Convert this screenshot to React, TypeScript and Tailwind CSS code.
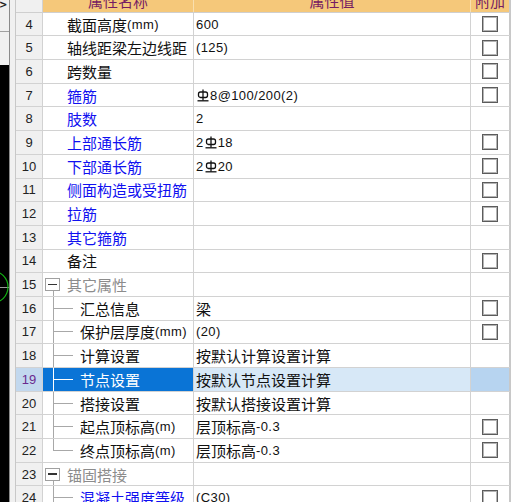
import React from "react";

type Row = {
  n: number;
  name: string;
  val?: string;
  cb?: boolean;
  blue?: boolean;
  kind?: "top" | "group" | "child" | "last";
  sel?: boolean;
};

const rows: Row[] = [
  { n: 4, name: "截面高度(mm)", val: "600", cb: true, kind: "top" },
  { n: 5, name: "轴线距梁左边线距", val: "(125)", cb: true, kind: "top" },
  { n: 6, name: "跨数量", val: "", cb: true, kind: "top" },
  { n: 7, name: "箍筋", val: "§8@100/200(2)", cb: true, blue: true, kind: "top" },
  { n: 8, name: "肢数", val: "2", cb: false, blue: true, kind: "top" },
  { n: 9, name: "上部通长筋", val: "2§18", cb: true, blue: true, kind: "top" },
  { n: 10, name: "下部通长筋", val: "2§20", cb: true, blue: true, kind: "top" },
  { n: 11, name: "侧面构造或受扭筋", val: "", cb: true, blue: true, kind: "top" },
  { n: 12, name: "拉筋", val: "", cb: true, blue: true, kind: "top" },
  { n: 13, name: "其它箍筋", val: "", cb: false, blue: true, kind: "top" },
  { n: 14, name: "备注", val: "", cb: true, kind: "top" },
  { n: 15, name: "其它属性", kind: "group" },
  { n: 16, name: "汇总信息", val: "梁", cb: true, kind: "child" },
  { n: 17, name: "保护层厚度(mm)", val: "(20)", cb: true, kind: "child" },
  { n: 18, name: "计算设置", val: "按默认计算设置计算", cb: false, kind: "child" },
  { n: 19, name: "节点设置", val: "按默认节点设置计算", cb: false, kind: "child", sel: true },
  { n: 20, name: "搭接设置", val: "按默认搭接设置计算", cb: false, kind: "child" },
  { n: 21, name: "起点顶标高(m)", val: "层顶标高-0.3", cb: true, kind: "child" },
  { n: 22, name: "终点顶标高(m)", val: "层顶标高-0.3", cb: true, kind: "last" },
  { n: 23, name: "锚固搭接", kind: "group" },
  { n: 24, name: "混凝土强度等级", val: "(C30)", cb: true, blue: true, kind: "child" },
];

function Rebar() {
  return (
    <svg
      width="12"
      height="13"
      viewBox="0 0 12 13"
      className="inline-block mx-[1px] align-[-1px]"
      fill="none"
      stroke="currentColor"
      strokeWidth="1.3"
    >
      <line x1="6" y1="0.5" x2="6" y2="11.5" />
      <rect x="1.5" y="3" width="9" height="5.5" rx="2" />
      <line x1="0.5" y1="11.8" x2="11.5" y2="11.8" />
    </svg>
  );
}

function Txt({ s }: { s: string }) {
  const parts = s.split(/(§|[\x20-\x7E]+)/).filter((p) => p !== "");
  return (
    <>
      {parts.map((p, i) => {
        if (p === "§") return <Rebar key={i} />;
        if (/^[\x20-\x7E]+$/.test(p))
          return (
            <span key={i} className="font-['Liberation_Sans',sans-serif] text-[13px] tracking-[0.4px]">
              {p}
            </span>
          );
        return (
          <span key={i} className="font-['Noto_Sans_CJK_SC',sans-serif] text-[15px]">
            {p}
          </span>
        );
      })}
    </>
  );
}

function Check() {
  return (
    <div className="w-[16px] h-[16px] border border-[#5c5c5c] bg-white shadow-[inset_0_0_0_1px_#b4b4b4]" />
  );
}

function NameCell({ r }: { r: Row }) {
  const line = r.sel ? "border-white" : "border-[#a8a8a8]";
  const color = r.sel ? "text-white" : r.kind === "group" ? "text-[#8c8c8c]" : r.blue ? "text-[#1010f0]" : "text-[#111]";
  const bg = r.sel ? "bg-[#0a74d6]" : "bg-white";
  if (r.kind === "group") {
    return (
      <div className={`w-[151px] h-full border-r border-[#d2d2d2] flex items-stretch ${bg}`}>
        <div className="ml-[2px] w-[15px] flex flex-col">
          <div className="flex-1" />
          <div className="h-[13px] border border-[#a0a0a0] bg-white flex items-center justify-center">
            <div className="w-[9px] h-[1.5px] bg-[#333]" />
          </div>
          <div className={`flex-1 ml-[8px] border-l ${line}`} />
        </div>
        <div className={`ml-[7px] flex items-center leading-none ${color}`}>
          <Txt s={r.name} />
        </div>
      </div>
    );
  }
  if (r.kind === "child" || r.kind === "last") {
    return (
      <div className={`w-[151px] h-full border-r border-[#d2d2d2] flex items-stretch ${bg}`}>
        <div className="ml-[10px] w-[20px] flex flex-col">
          <div className={`flex-1 border-l border-b ${line}`} />
          <div className={`flex-1 ${r.kind === "child" ? `border-l ${line}` : ""}`} />
        </div>
        <div className={`ml-[7px] flex items-center leading-none whitespace-nowrap ${color}`}>
          <Txt s={r.name} />
        </div>
      </div>
    );
  }
  return (
    <div className={`w-[151px] h-full border-r border-[#d2d2d2] flex items-center pl-[24px] leading-none whitespace-nowrap ${bg} ${color}`}>
      <Txt s={r.name} />
    </div>
  );
}

function GridRow({ r }: { r: Row }) {
  return (
    <div className="flex h-[23.7px] shrink-0 border-b border-[#d2d2d2]">
      <div
        className={`w-[27px] h-full border-r border-[#d2d2d2] flex items-center justify-center font-['Liberation_Sans',sans-serif] text-[13px] leading-none ${
          r.sel ? "bg-[#c2d8ee] text-[#6a2a8e]" : "bg-[#f0f0f0] text-[#222]"
        }`}
      >
        {r.n}
      </div>
      <NameCell r={r} />
      <div
        className={`w-[277px] h-full border-r border-[#d2d2d2] flex items-center pl-[2px] leading-none whitespace-nowrap text-[#111] ${
          r.sel ? "bg-[#d7e8f7]" : r.kind === "group" ? "bg-white" : "bg-white"
        }`}
      >
        {r.val ? <Txt s={r.val} /> : null}
      </div>
      <div
        className={`w-[39px] h-full border-r border-[#c8c8c8] flex items-center justify-center ${
          r.sel ? "bg-[#b7d4f0]" : "bg-white"
        }`}
      >
        {r.cb ? <Check /> : null}
      </div>
    </div>
  );
}

export default function App() {
  return (
    <div className="w-[513px] h-[502px] overflow-hidden flex bg-white">
      {/* left CAD strip */}
      <div className="w-[10px] h-full flex flex-col border-r border-[#8a8a8a] shrink-0">
        <div className="h-[31px] bg-[#f0f0f0] overflow-hidden">
          <div className="-ml-[1px] mt-[0px] font-['DejaVu_Sans',sans-serif] text-[10px] font-bold leading-none text-[#222]">
            &gt;
          </div>
        </div>
        <div className="h-[1px] bg-[#a0a0a0]" />
        <div className="h-[33px] bg-[#f0f0f0]" />
        <div className="flex-1 bg-black overflow-hidden">
          <svg width="9" height="437" viewBox="0 0 9 437">
            <line x1="0" y1="222.5" x2="9" y2="222.5" stroke="#9a9a9a" strokeWidth="1" />
            <circle cx="-8" cy="222" r="16" fill="none" stroke="#12b312" strokeWidth="1.2" />
          </svg>
        </div>
      </div>
      <div className="w-[5px] h-full bg-[#f0f0f0] shrink-0" />
      {/* grid */}
      <div className="w-[496px] h-full flex flex-col border-l border-r border-[#c8c8c8] shrink-0">
        <div className="flex h-[23.7px] shrink-0 -mt-[11px] border-b border-[#cfcfcf]">
          <div className="w-[27px] h-full border-r border-[#d2d2d2] bg-[#f0f0f0]" />
          <div className="w-[151px] h-full border-r border-[#f9dfae] bg-[#f5c87a] flex items-center justify-center font-['Noto_Sans_CJK_SC',sans-serif] text-[15px] leading-none text-[#761c63]">
            属性名称
          </div>
          <div className="w-[277px] h-full border-r border-[#f9dfae] bg-[#f5c87a] flex items-center justify-center font-['Noto_Sans_CJK_SC',sans-serif] text-[15px] leading-none text-[#761c63]">
            属性值
          </div>
          <div className="w-[39px] h-full border-r border-[#c8c8c8] bg-[#f5c87a] flex items-center justify-center font-['Noto_Sans_CJK_SC',sans-serif] text-[15px] leading-none text-[#761c63]">
            附加
          </div>
        </div>
        {rows.map((r) => (
          <GridRow key={r.n} r={r} />
        ))}
      </div>
    </div>
  );
}
